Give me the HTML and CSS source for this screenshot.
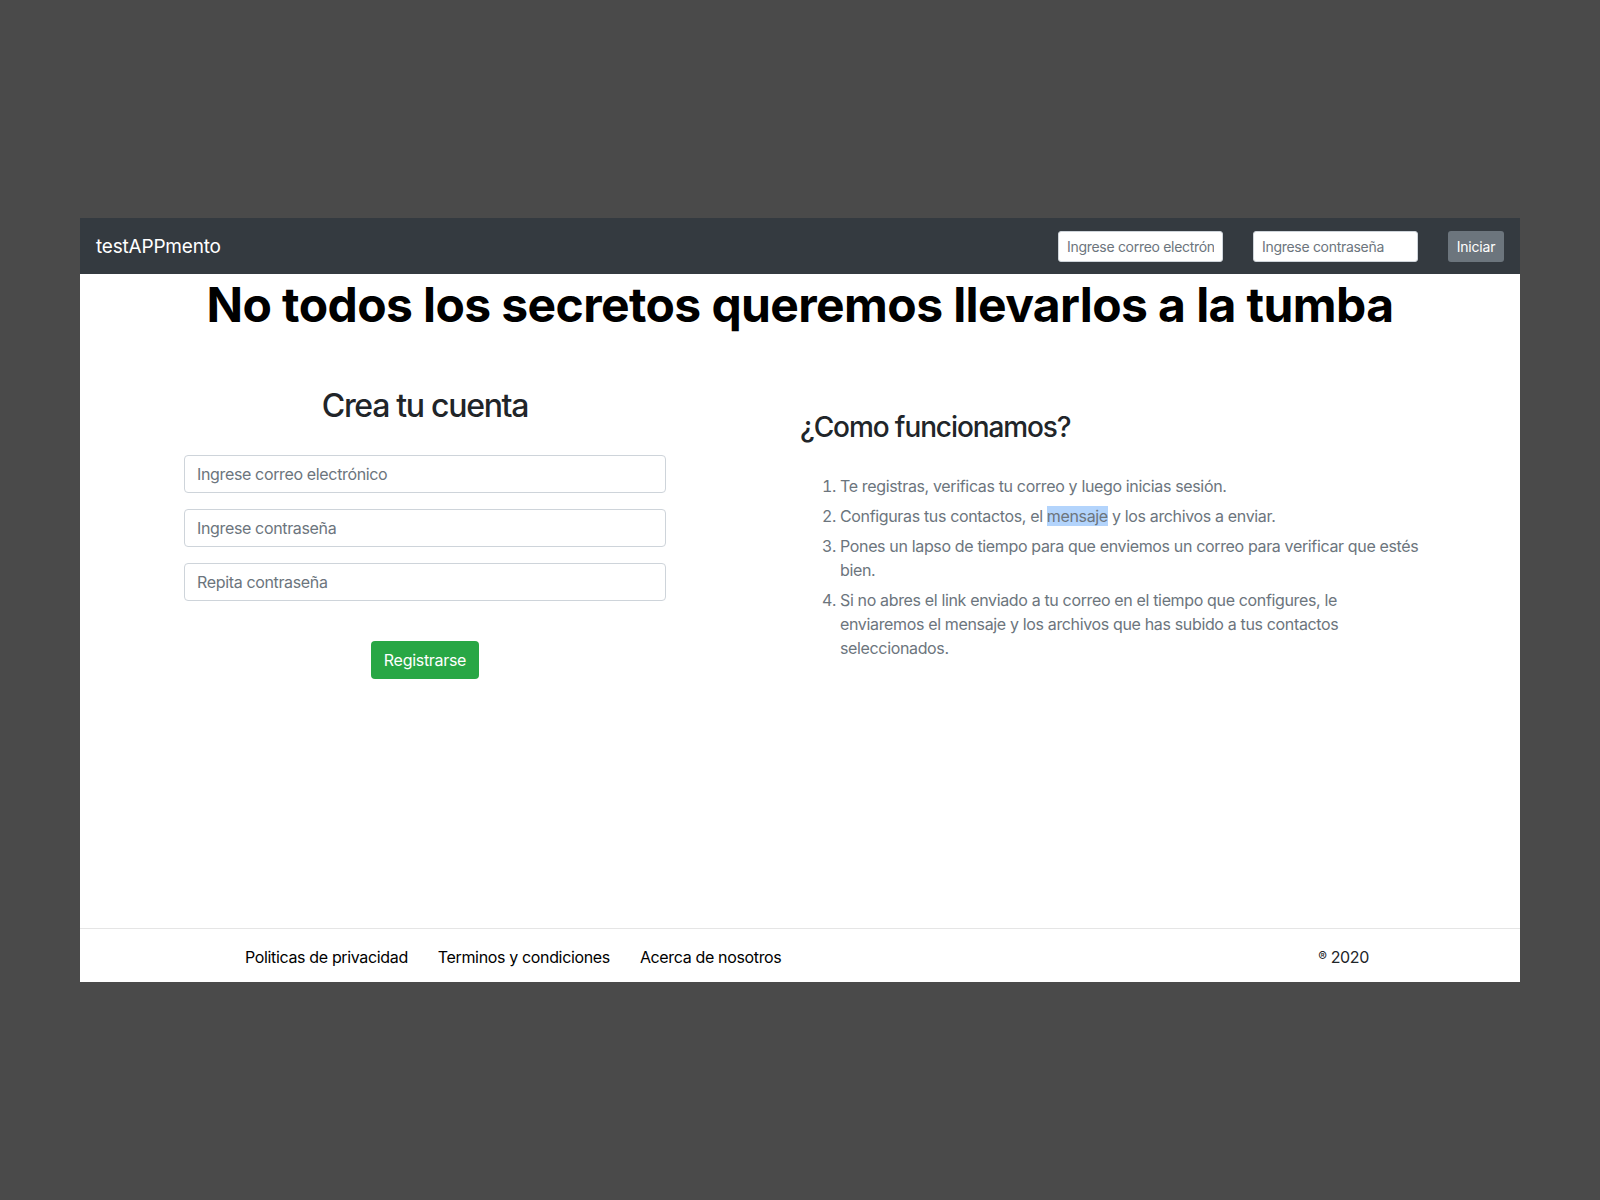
FILE: index.html
```html
<!DOCTYPE html>
<html lang="es">
<head>
<meta charset="utf-8">
<title>testAPPmento</title>
<link rel="stylesheet" href="styles.css">
</head>
<body>
<div class="window">
  <nav class="navbar">
    <span class="brand">testAPPmento</span>
    <form class="nav-form">
      <input class="nav-input" type="email" placeholder="Ingrese correo electrónico">
      <input class="nav-input" type="password" placeholder="Ingrese contraseña">
      <button class="btn-gray" type="button">Iniciar</button>
    </form>
  </nav>
  <main class="main">
    <h1 class="hero">No todos los secretos queremos llevarlos a la tumba</h1>
    <div class="row">
      <section class="col-left">
        <h2 class="title">Crea tu cuenta</h2>
        <form class="signup">
          <input class="field" type="email" placeholder="Ingrese correo electrónico">
          <input class="field" type="password" placeholder="Ingrese contraseña">
          <input class="field" type="password" placeholder="Repita contraseña">
          <button class="btn-green" type="button">Registrarse</button>
        </form>
      </section>
      <section class="col-right">
        <h3 class="subtitle">¿Como funcionamos?</h3>
        <ol class="steps">
          <li>Te registras, verificas tu correo y luego inicias sesión.</li>
          <li>Configuras tus contactos, el <span class="sel">mensaje</span> y los archivos a enviar.</li>
          <li>Pones un lapso de tiempo para que enviemos un correo para verificar que estés bien.</li>
          <li>Si no abres el link enviado a tu correo en el tiempo que configures, le enviaremos el mensaje y los archivos que has subido a tus contactos seleccionados.</li>
        </ol>
      </section>
    </div>
  </main>
  <footer class="footer">
    <div class="links">
      <a class="link">Politicas de privacidad</a>
      <a class="link">Terminos y condiciones</a>
      <a class="link">Acerca de nosotros</a>
    </div>
    <span class="copy"><span class="reg">®</span> 2020</span>
  </footer>
</div>
</body>
</html>
```
FILE: styles.css
```css
* { box-sizing: border-box; }
html, body { margin: 0; padding: 0; }
body {
  background: #4a4a4a;
  font-family: Inter, "Liberation Sans", sans-serif;
  color: #212529;
  letter-spacing: -0.35px;
}
.window {
  width: 1440px;
  height: 764px;
  margin: 218px 0 0 80px;
  background: #fff;
  display: flex;
  flex-direction: column;
  overflow: hidden;
}
.navbar {
  height: 56px;
  background: #343a40;
  display: flex;
  align-items: center;
  justify-content: space-between;
  padding: 0 16px;
  flex: none;
}
.brand {
  color: #fff;
  font-size: 19px;
  letter-spacing: -0.2px;
}
.nav-form {
  display: flex;
  align-items: center;
  gap: 30px;
}
.nav-input {
  width: 165px;
  height: 31px;
  border: 1px solid #ced4da;
  border-radius: 3px;
  padding: 4px 8px;
  font-family: inherit;
  font-size: 14px;
  letter-spacing: -0.3px;
  color: #495057;
  background: #fff;
}
.nav-input::placeholder, .field::placeholder { color: #6c757d; opacity: 1; }
.btn-gray {
  height: 31px;
  width: 56px;
  border: none;
  border-radius: 3px;
  background: #6c757d;
  color: #fff;
  font-family: inherit;
  font-size: 14px;
  letter-spacing: -0.2px;
  padding: 0;
}
.main {
  flex: 1;
}
.hero {
  margin: 2px 0 0;
  text-align: center;
  font-size: 48px;
  line-height: 1.2;
  font-weight: 700;
  color: #000;
  letter-spacing: -0.6px;
}
.row {
  display: flex;
}
.col-left {
  width: 690px;
  padding-top: 53px;
  display: flex;
  flex-direction: column;
  align-items: center;
}
.title {
  margin: 0;
  font-size: 32px;
  line-height: 1.2;
  font-weight: 500;
  letter-spacing: -1.3px;
}
.signup {
  margin-top: 30px;
  width: 482px;
  display: flex;
  flex-direction: column;
  align-items: center;
  gap: 16px;
}
.field {
  width: 100%;
  height: 38px;
  border: 1px solid #ced4da;
  border-radius: 4px;
  padding: 6px 12px;
  font-family: inherit;
  font-size: 16px;
  letter-spacing: -0.35px;
  color: #495057;
}
.btn-green {
  margin-top: 24px;
  height: 38px;
  padding: 0 13px;
  border: none;
  border-radius: 4px;
  background: #28a745;
  color: #fff;
  font-family: inherit;
  font-size: 16px;
  letter-spacing: -0.3px;
}
.col-right {
  padding-top: 77px;
  padding-left: 30px;
}
.subtitle {
  margin: 0;
  font-size: 28px;
  line-height: 1.2;
  font-weight: 500;
  letter-spacing: -1.1px;
}
.steps {
  margin: 30px 0 0;
  padding-left: 40px;
  width: 622px;
  color: #6c757d;
  font-size: 16px;
  line-height: 24px;
}
.steps li {
  margin-bottom: 6px;
}
.sel { background: #b3d4fc; }
.footer {
  flex: none;
  height: 54px;
  border-top: 1px solid #e5e5e5;
  display: flex;
  align-items: center;
  justify-content: space-between;
  padding: 2px 151px 0 165px;
  font-size: 16px;
}
.links {
  display: flex;
  gap: 30px;
}
.link {
  color: #000;
  text-decoration: none;
}
.copy { color: #212529; }
.reg { font-size: 13px; vertical-align: 2px; }
```
